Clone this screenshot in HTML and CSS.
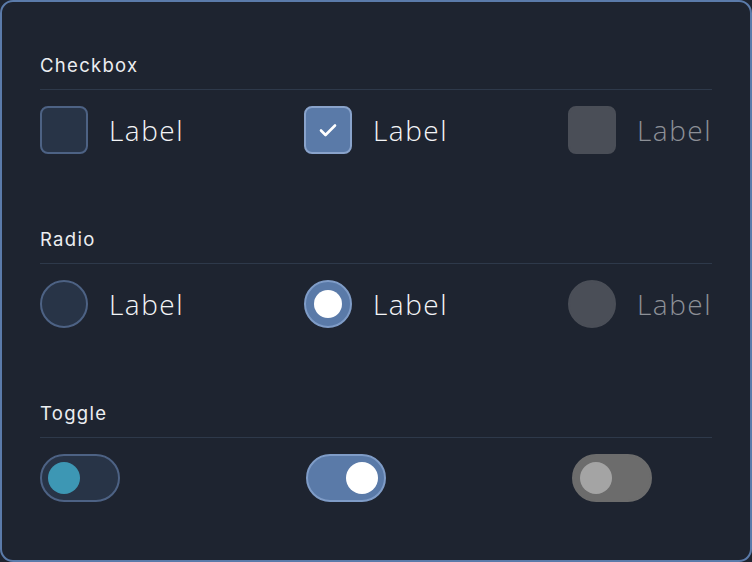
FILE: index.html
```html
<!DOCTYPE html>
<html>
<head>
<meta charset="utf-8">
<link rel="stylesheet" href="styles.css">
</head>
<body>
<div class="card">
  <section class="group">
    <h2 class="title">Checkbox</h2>
    <div class="row">
      <div class="item"><span class="box"></span><span class="label">Label</span></div>
      <div class="item"><span class="box checked"><svg viewBox="0 0 24 24" width="24" height="24"><path d="M5 12.5l4.5 4.5L19 7.5" fill="none" stroke="#fff" stroke-width="2.6" stroke-linecap="round" stroke-linejoin="round"/></svg></span><span class="label">Label</span></div>
      <div class="item"><span class="box disabled"></span><span class="label dim">Label</span></div>
    </div>
  </section>
  <section class="group">
    <h2 class="title">Radio</h2>
    <div class="row">
      <div class="item"><span class="radio"></span><span class="label">Label</span></div>
      <div class="item"><span class="radio on"><span class="dot"></span></span><span class="label">Label</span></div>
      <div class="item"><span class="radio disabled"></span><span class="label dim">Label</span></div>
    </div>
  </section>
  <section class="group">
    <h2 class="title">Toggle</h2>
    <div class="row">
      <div class="item titem"><span class="toggle"><span class="knob"></span></span></div>
      <div class="item titem"><span class="toggle on"><span class="knob"></span></span></div>
      <div class="item titem"><span class="toggle disabled"><span class="knob"></span></span></div>
    </div>
  </section>
</div>
</body>
</html>
```
FILE: styles.css
```css
html, body { margin: 0; padding: 0; background: #1e2430; }
.card {
  box-sizing: border-box;
  width: 752px;
  height: 562px;
  background: #1e2430;
  border: 2px solid #5b7baa;
  border-radius: 13px;
  padding: 51px 38px 0 38px;
  display: flex;
  flex-direction: column;
  gap: 73px;
}
.group { display: flex; flex-direction: column; }
.title {
  margin: 0;
  font-family: Inter, "Noto Sans", sans-serif;
  font-weight: 400;
  font-size: 18.5px;
  line-height: 24px;
  letter-spacing: 1.3px;
  color: #eceef1;
  padding-bottom: 12px;
  border-bottom: 1px solid #2e394a;
  margin-bottom: 16px;
}
.row { display: flex; justify-content: space-between; align-items: center; height: 48px; }
.item { display: flex; align-items: center; gap: 21px; width: 144px; }
.titem { width: 140px; }
.label {
  font-family: "Open Sans", "Noto Sans", sans-serif;
  font-weight: 300;
  font-size: 28px;
  letter-spacing: 1.5px;
  line-height: 48px;
  color: #f4f5f7;
  white-space: nowrap;
}
.label.dim { color: #8d9097; }
.box {
  box-sizing: border-box;
  width: 48px; height: 48px;
  border-radius: 8px;
  background: #283447;
  border: 2px solid #4d6284;
  display: flex; align-items: center; justify-content: center;
  flex: none;
}
.box.checked { background: #5a7aa8; border-color: #89a3cb; }
.box.disabled { background: #4a4e57; border-color: #4a4e57; }
.radio {
  box-sizing: border-box;
  width: 48px; height: 48px;
  border-radius: 50%;
  background: #283447;
  border: 2px solid #4d6284;
  display: flex; align-items: center; justify-content: center;
  flex: none;
}
.radio.on { background: #5a7aa8; border-color: #7f9cc7; }
.radio.disabled { background: #4a4e57; border-color: #4a4e57; }
.dot { width: 28px; height: 28px; border-radius: 50%; background: #ffffff; }
.toggle {
  box-sizing: border-box;
  width: 80px; height: 48px;
  border-radius: 24px;
  background: #283447;
  border: 2px solid #4d6284;
  display: flex; align-items: center;
  padding: 0 6px;
  flex: none;
}
.knob { width: 32px; height: 32px; border-radius: 50%; background: #3d97b4; }
.toggle.on { background: #5a7aa8; border-color: #7f9cc7; justify-content: flex-end; }
.toggle.on .knob { background: #ffffff; }
.toggle.disabled { background: #6c6c6c; border-color: #6c6c6c; }
.toggle.disabled .knob { background: #a4a4a4; }
```
